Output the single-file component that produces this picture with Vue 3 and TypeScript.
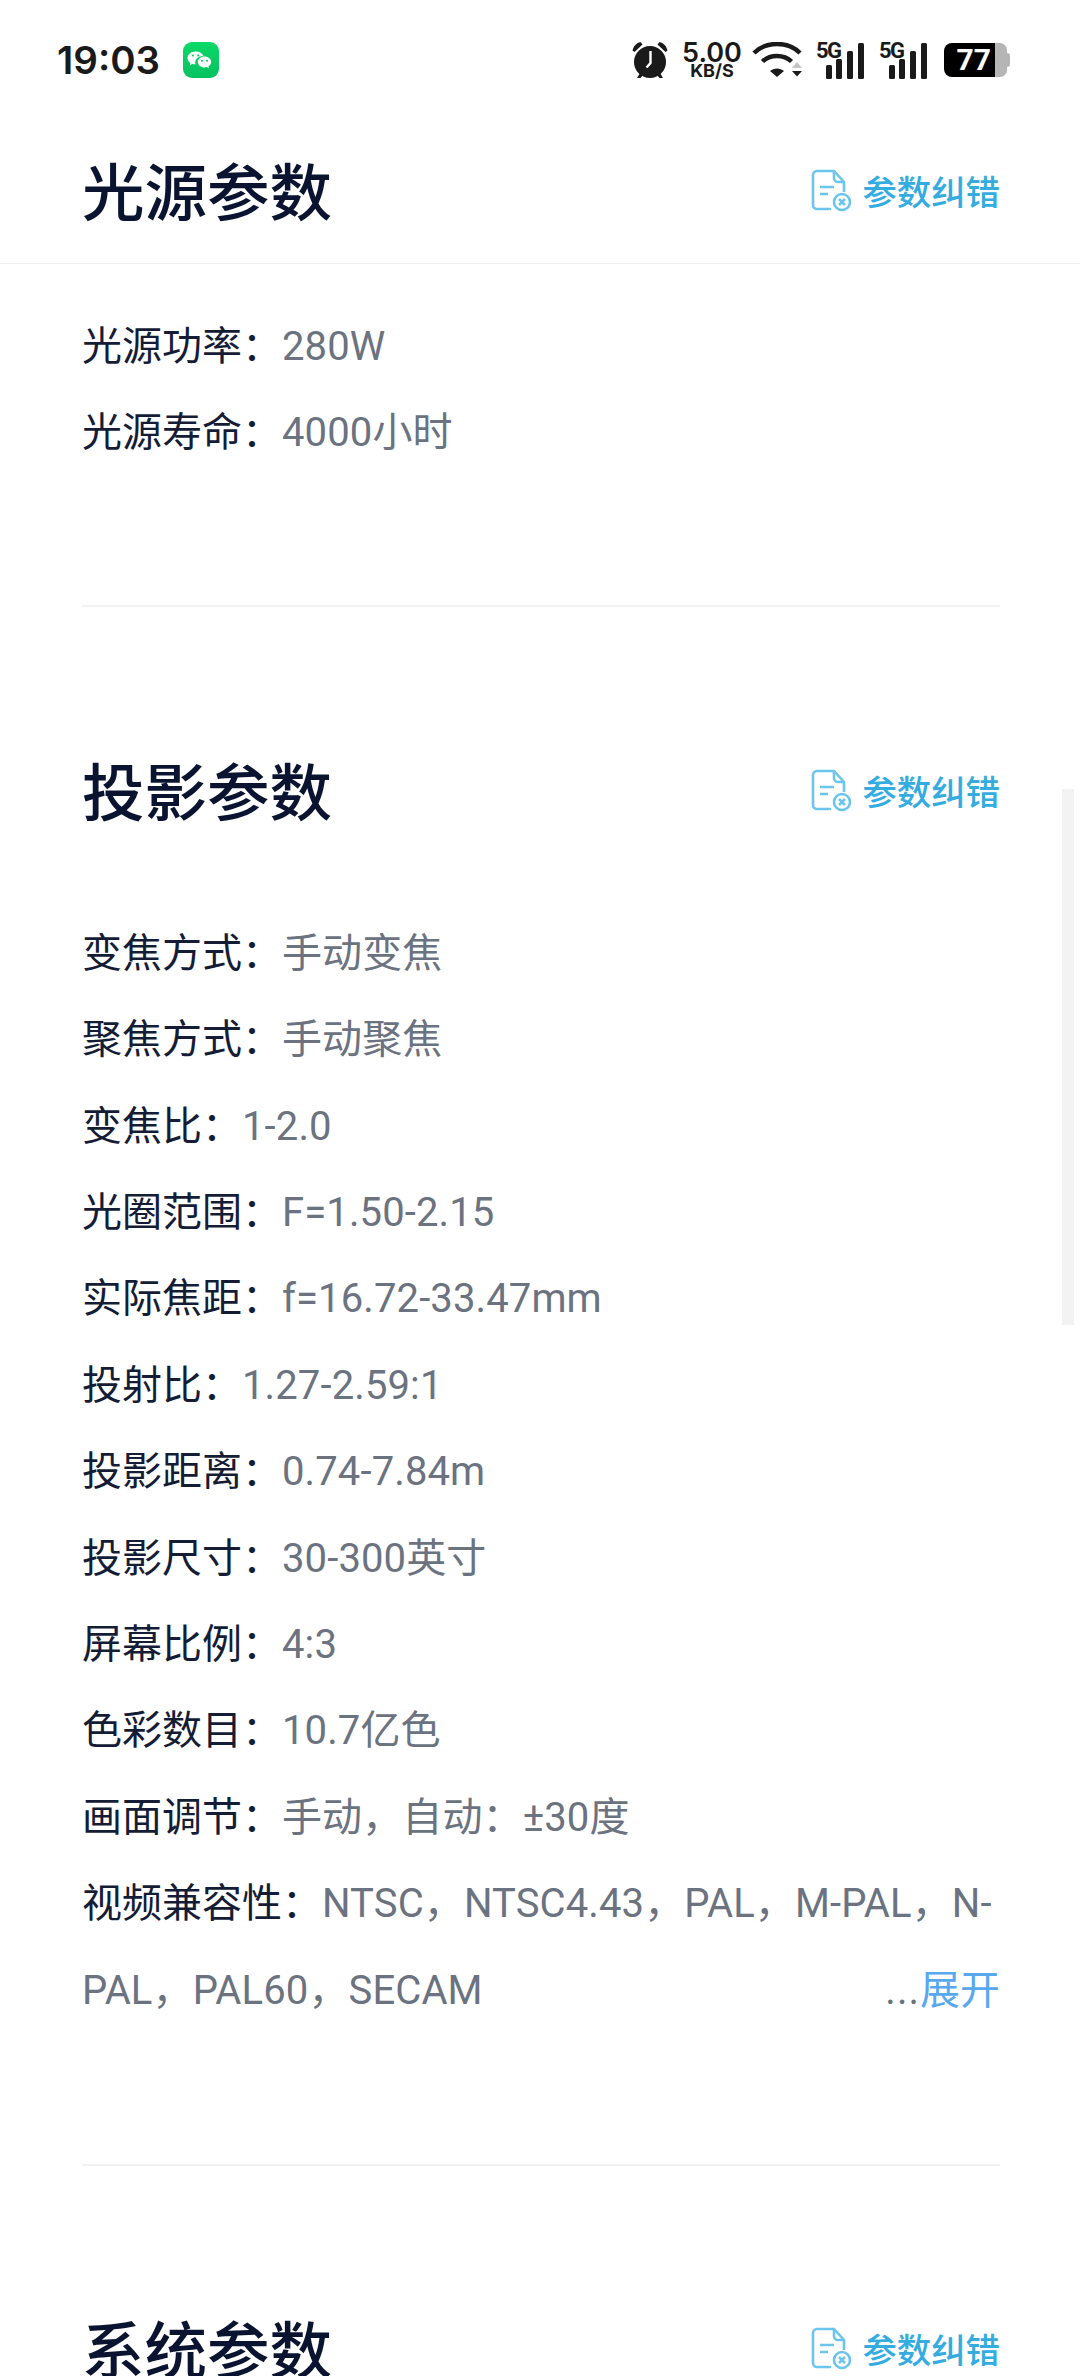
<script setup lang="ts">
interface Row { label: string; value: string; more?: boolean }
interface Section { title: string; rows: Row[] }

const first: Section = {
  title: '光源参数',
  rows: [
    { label: '光源功率：', value: '280W' },
    { label: '光源寿命：', value: '4000小时' },
  ],
}
const second: Section = {
  title: '投影参数',
  rows: [
    { label: '变焦方式：', value: '手动变焦' },
    { label: '聚焦方式：', value: '手动聚焦' },
    { label: '变焦比：', value: '1-2.0' },
    { label: '光圈范围：', value: 'F=1.50-2.15' },
    { label: '实际焦距：', value: 'f=16.72-33.47mm' },
    { label: '投射比：', value: '1.27-2.59:1' },
    { label: '投影距离：', value: '0.74-7.84m' },
    { label: '投影尺寸：', value: '30-300英寸' },
    { label: '屏幕比例：', value: '4:3' },
    { label: '色彩数目：', value: '10.7亿色' },
    { label: '画面调节：', value: '手动，自动：±30度' },
    { label: '视频兼容性：', value: 'NTSC，NTSC4.43，PAL，M-PAL，N-PAL，PAL60，SECAM', more: true },
  ],
}
</script>

<template>
  <div class="page">
    <div class="status">
      <span class="time">19:03</span>
      <svg class="wechat" width="36" height="36" viewBox="0 0 36 36">
        <defs>
          <linearGradient id="wg" x1="0" y1="0" x2="0" y2="1">
            <stop offset="0" stop-color="#0bd968" />
            <stop offset="1" stop-color="#07c160" />
          </linearGradient>
        </defs>
        <rect width="36" height="36" rx="9" fill="url(#wg)" />
        <path d="M12.500 9.500c-4.400 0-8 2.900-8 6.500 0 2 1.100 3.800 2.900 5l-.7 2.400 2.700-1.400c1 .3 2 .5 3.100.5-.2-.6-.3-1.200-.3-1.800 0-3.700 3.500-6.600 7.800-6.600h.4c-.9-2.600-4-4.600-7.900-4.600z" fill="#fff" />
        <path d="M21.500 14.500c-3.700 0-6.700 2.500-6.700 5.500 0 3 3 5.500 6.700 5.500.8 0 1.600-.1 2.300-.4l2.200 1.200-.6-2c1.700-1 2.800-2.600 2.800-4.300 0-3-3-5.500-6.700-5.500z" fill="#fff" />
        <circle cx="9.800" cy="13.500" r="1.100" fill="#08c862" />
        <circle cx="15.200" cy="13.500" r="1.100" fill="#08c862" />
        <circle cx="19" cy="18.800" r="1" fill="#08c862" />
        <circle cx="24" cy="18.800" r="1" fill="#08c862" />
      </svg>
      <div class="status-right">
        <svg class="alarm" width="38" height="38" viewBox="0 0 38 38">
          <circle cx="19" cy="21" r="16" fill="#1a1a1a" />
          <path d="M1.500 9.500C2.500 5 5.500 2 9.500 1l2 2.500-8 7.500zM36.500 9.500C35.500 5 32.500 2 28.500 1l-2 2.500 8 7.500z" fill="#1a1a1a" />
          <path d="M9 32l-3 5h3.500l3-3.500zM29 32l3 5h-3.500l-3-3.500z" fill="#1a1a1a" />
          <path d="M19.500 10v12l-4 4.500" fill="none" stroke="#fff" stroke-width="2.400" />
        </svg>
        <div class="speed"><span class="speed-num">5.00</span><span class="speed-unit">KB/S</span></div>
        <svg class="wifi" width="50" height="36" viewBox="0 0 50 36">
          <path d="M2 11C14 -1 36 -1 48 11" fill="none" stroke="#1a1a1a" stroke-width="4.500" />
          <path d="M10.500 19.500C18 12 32 12 39.500 19.500" fill="none" stroke="#1a1a1a" stroke-width="4.500" />
          <path d="M25 35l-7-6c4-3.500 10-3.500 14 0z" fill="#1a1a1a" />
          <path d="M45 20l5 6H40z" fill="#c4c4c4" />
          <path d="M40 29h10l-5 5.500z" fill="#1a1a1a" />
        </svg>
        <div v-for="n in 2" :key="n" class="signal">
          <span class="fiveg">5G</span>
          <i class="bar b1"></i><i class="bar b2"></i><i class="bar b3"></i><i class="bar b4"></i>
        </div>
        <div class="battery">
          <div class="batt-fill"><span>77</span></div>
          <div class="batt-rest"></div>
          <div class="batt-nub"></div>
        </div>
      </div>
    </div>

    <header class="sec-head sticky">
      <h2 class="title">{{ first.title }}</h2>
      <a class="fix">
        <svg width="40" height="44" viewBox="0 0 40 44" fill="none" stroke="#6ec5ec" stroke-width="2.600">
          <path d="M33 24V14L23 3H6a4 4 0 0 0-4 4v30a4 4 0 0 0 4 4h14" />
          <path d="M23 3v7a4 4 0 0 0 4 4h6" />
          <path d="M9 19h14M9 26h8" />
          <circle cx="31" cy="34" r="8" />
          <path d="M28 31l6 6M34 31l-6 6" />
        </svg>
        <span>参数纠错</span>
      </a>
    </header>
    <section class="rows rows-first">
      <p v-for="r in first.rows" :key="r.label" class="row"><span class="label">{{ r.label }}</span><span class="value">{{ r.value }}</span></p>
    </section>
    <hr class="rule rule-first" />

    <header class="sec-head">
      <h2 class="title">{{ second.title }}</h2>
      <a class="fix">
        <svg width="40" height="44" viewBox="0 0 40 44" fill="none" stroke="#6ec5ec" stroke-width="2.600">
          <path d="M33 24V14L23 3H6a4 4 0 0 0-4 4v30a4 4 0 0 0 4 4h14" />
          <path d="M23 3v7a4 4 0 0 0 4 4h6" />
          <path d="M9 19h14M9 26h8" />
          <circle cx="31" cy="34" r="8" />
          <path d="M28 31l6 6M34 31l-6 6" />
        </svg>
        <span>参数纠错</span>
      </a>
    </header>
    <section class="rows rows-second">
      <p v-for="r in second.rows" :key="r.label" class="row"><span class="label">{{ r.label }}</span><span class="value">{{ r.value }}</span><span v-if="r.more" class="more"><span class="dots">...</span><span class="open">展开</span></span></p>
    </section>
    <hr class="rule rule-second" />

    <header class="sec-head last">
      <h2 class="title">系统参数</h2>
      <a class="fix">
        <svg width="40" height="44" viewBox="0 0 40 44" fill="none" stroke="#6ec5ec" stroke-width="2.600">
          <path d="M33 24V14L23 3H6a4 4 0 0 0-4 4v30a4 4 0 0 0 4 4h14" />
          <path d="M23 3v7a4 4 0 0 0 4 4h6" />
          <path d="M9 19h14M9 26h8" />
          <circle cx="31" cy="34" r="8" />
          <path d="M28 31l6 6M34 31l-6 6" />
        </svg>
        <span>参数纠错</span>
      </a>
    </header>

    <div class="scrollbar"></div>
  </div>
</template>

<style scoped>
.page {
  position: relative;
  width: 1080px;
  height: 2376px;
  overflow: hidden;
  background: #fff;
  font-family: Roboto, "Noto Sans CJK SC", sans-serif;
}
.status {
  display: flex;
  align-items: center;
  height: 60px;
  padding: 30px 70px 0 57px;
  color: #1a1a1a;
}
.time {
  font-family: Inter, sans-serif;
  font-weight: 600;
  font-size: 38.500px;
  line-height: 1;
}
.wechat { margin-left: 23px; }
.status-right {
  margin-left: auto;
  display: flex;
  align-items: center;
  height: 40px;
}
.speed {
  display: flex;
  flex-direction: column;
  align-items: center;
  margin-left: 13px;
  padding-bottom: 2px;
  width: 60px;
  font-family: Inter, sans-serif;
}
.speed-num { font-size: 27px; font-weight: 600; line-height: 23px; }
.speed-unit { font-size: 18px; font-weight: 700; line-height: 14px; }
.wifi { margin-left: 10px; }
.signal {
  position: relative;
  width: 48px;
  height: 37px;
  margin-left: 14px;
}
.signal + .signal { margin-left: 15px; }
.fiveg {
  position: absolute;
  left: 0;
  top: -2px;
  font-family: Roboto, sans-serif;
  font-weight: 700;
  font-size: 22px;
  line-height: 22px;
  letter-spacing: -1.500px;
}
.bar {
  position: absolute;
  bottom: 0;
  width: 6px;
  border-radius: 1.500px;
  background: #1a1a1a;
}
.b1 { left: 10px; height: 14px; }
.b2 { left: 20px; height: 20px; }
.b3 { left: 31px; height: 28px; }
.b4 { left: 42px; height: 36px; }
.battery {
  display: flex;
  align-items: center;
  margin-left: 17px;
  height: 34px;
}
.batt-fill {
  width: 51px;
  height: 34px;
  background: #000;
  border-radius: 8px 0 0 8px;
  color: #fff;
  font-family: Roboto, sans-serif;
  font-weight: 700;
  font-size: 30px;
  line-height: 34px;
  text-align: right;
  padding-right: 4px;
  box-sizing: border-box;
}
.batt-rest {
  width: 12px;
  height: 34px;
  background: #b5b5b5;
  border-radius: 0 7px 7px 0;
}
.batt-nub {
  width: 3px;
  height: 14px;
  background: #b5b5b5;
  border-radius: 0 3px 3px 0;
}
.sec-head {
  display: flex;
  align-items: center;
  justify-content: space-between;
  height: 100px;
  margin: 0 80px 0 82px;
}
.sticky {
  height: 174px;
  margin: 0;
  padding: 24px 80px 0 82px;
  border-bottom: 1px solid #eee;
  box-sizing: border-box;
}
.title {
  margin: 0;
  font-family: "Noto Sans CJK SC", sans-serif;
  font-weight: 500;
  font-size: 62.500px;
  line-height: 100px;
  color: #0a1430;
}
.fix {
  display: flex;
  align-items: center;
  gap: 11px;
  padding-top: 2px;
  font-family: "Noto Sans CJK SC", sans-serif;
  font-size: 34.400px;
  font-weight: 500;
  line-height: 44px;
  color: #34acdf;
}
.rows { margin: 0 80px 0 82px; }
.rows-first { padding-top: 40px; }
.rows-second { margin-top: 72px; }
.row {
  position: relative;
  margin: 0;
  font-size: 40px;
  line-height: 86.400px;
}
.label {
  font-family: "Noto Sans CJK SC", sans-serif;
  line-height: 40px;
  color: #141c36;
}
.value {
  font-family: Roboto, "Noto Sans CJK SC", sans-serif;
  line-height: 40px;
  letter-spacing: 0.120px;
  color: #6b7280;
}
.more {
  position: absolute;
  right: 0;
  bottom: 0;
  line-height: 86.400px;
}
.dots { color: #6b7280; letter-spacing: 1px; }
.open {
  font-family: "Noto Sans CJK SC", sans-serif;
  line-height: 40px;
  color: #58a8f0;
}
.rule {
  margin: 0 80px 0 82px;
  border: 0;
  height: 2px;
  background: #f2f2f2;
}
.rule-first { margin-top: 128px; margin-bottom: 132px; }
.rule-second { margin-top: 130px; margin-bottom: 131px; }
.scrollbar {
  position: absolute;
  left: 1062px;
  top: 789px;
  width: 12px;
  height: 536px;
  background: #f3f3f3;
}
</style>

<style>
html, body { margin: 0; background: #fff; overflow: hidden; }
</style>
